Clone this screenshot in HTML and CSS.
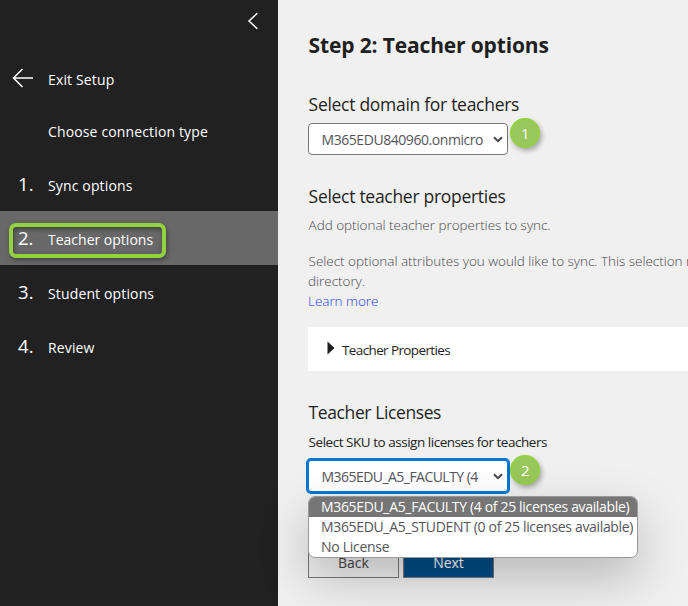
FILE: index.html
```html
<!DOCTYPE html>
<html lang="en">
<head>
<meta charset="utf-8">
<title>Teacher options</title>
<link rel="stylesheet" href="styles.css">
</head>
<body>
<div class="app">
  <nav class="sidebar">
    <div class="collapse">
      <svg width="12" height="18" viewBox="0 0 12 18"><path d="M10.3 1.2 2 9l8.300 7.800"/></svg>
    </div>
    <a class="nav-item exit"><span class="num"><svg width="22" height="20" viewBox="0 0 22 20"><path d="M21 10H1.500M10.500 1 1.500 10l9 9"/></svg></span><span>Exit Setup</span></a>
    <a class="nav-item choose"><span class="num"></span><span>Choose connection type</span></a>
    <a class="nav-item"><span class="num">1.</span><span>Sync options</span></a>
    <a class="nav-item active"><span class="num">2.</span><span>Teacher options</span><span class="highlight"></span></a>
    <a class="nav-item"><span class="num">3.</span><span>Student options</span></a>
    <a class="nav-item"><span class="num">4.</span><span>Review</span></a>
  </nav>
  <main class="content">
    <h1>Step 2: Teacher options</h1>
    <h2 class="domain-title">Select domain for teachers</h2>
    <div class="select">
      <span class="value">M365EDU840960.onmicro</span>
      <svg class="chevron" width="10" height="7" viewBox="0 0 10 7"><path d="m1 1.200 4 4 4-4"/></svg>
      <span class="badge">1</span>
    </div>
    <h2 class="props-title">Select teacher properties</h2>
    <p>Add optional teacher properties to sync.</p>
    <p class="p-attr">Select optional attributes you would like to sync. This selection r<br>directory.<br><a class="learn">Learn more</a></p>
    <div class="card"><svg width="8" height="14" viewBox="0 0 8 14"><path d="M.5.500 7.500 7l-7 6.500z"/></svg><span>Teacher Properties</span></div>
    <h2 class="lic-title">Teacher Licenses</h2>
    <p class="sku">Select SKU to assign licenses for teachers</p>
    <div class="select focused">
      <span class="value">M365EDU_A5_FACULTY (4</span>
      <svg class="chevron" width="10" height="7" viewBox="0 0 10 7"><path d="m1 1.200 4 4 4-4"/></svg>
      <span class="badge">2</span>
      <div class="menu">
        <div class="option selected">M365EDU_A5_FACULTY (4 of 25 licenses available)</div>
        <div class="option">M365EDU_A5_STUDENT (0 of 25 licenses available)</div>
        <div class="option none">No License</div>
      </div>
    </div>
    <div class="buttons"><button class="back">Back</button><button class="next">Next</button></div>
  </main>
</div>
</body>
</html>
```
FILE: styles.css
```css
* { box-sizing: border-box; }
body { margin: 0; font-family: "Open Sans", "Noto Sans", sans-serif; font-size: 13.5px; color: #1f1f22; }
h1, h2, p { margin: 0; white-space: nowrap; }
.app { display: flex; width: 688px; height: 606px; overflow: hidden; }
.sidebar { flex: none; width: 278px; background: #212121; color: #fff; }
.sidebar svg { display: block; fill: none; stroke: #fff; stroke-width: 1.5; }
.collapse { height: 52px; padding: 12px 19px 0 0; display: flex; justify-content: flex-end; }
.nav-item { position: relative; display: flex; align-items: center; height: 54px; padding: 3px 0 0 12px; white-space: nowrap; font-size: 14px; letter-spacing: .14px; }
.num { flex: none; width: 36px; padding-left: 6px; font-size: 18.5px; line-height: 24px; margin-top: -4px; }
.exit { padding-top: 1px; }
.exit .num { padding-left: 0; }
.choose { height: 51px; padding-top: 0; }
.active { background: #686868; letter-spacing: 0; }
.highlight { position: absolute; left: 9px; top: 12px; width: 157px; height: 35px; border: 4px solid #92d13f; border-radius: 7px; box-shadow: 1px 2px 5px rgba(0,0,0,.4), inset 1px 2px 5px rgba(0,0,0,.4); }
.content { flex: none; width: 410px; height: 606px; padding: 30px 0 0 30px; background: #f0f0f0; }
h1 { font-size: 21px; line-height: 30px; font-weight: 700; letter-spacing: -.15px; text-indent: .6px; }
h2 { font-size: 17.5px; line-height: 24px; font-weight: 400; letter-spacing: -.29px; text-indent: .6px; }
.domain-title { margin: 32px 0 7px; }
.select { position: relative; display: flex; align-items: center; justify-content: space-between; width: 200px; height: 32px; padding: 0 4px 0 12.5px; border: 1px solid #777; border-radius: 4px; background: #fff; color: #55555c; font-size: 14px; letter-spacing: -.44px; }
.value { width: 162px; overflow: hidden; white-space: nowrap; line-height: 24px; margin-top: 2px; font-weight: 400; }
.chevron { fill: none; stroke: #444850; stroke-width: 2; }
.badge { position: absolute; left: 201px; top: -6px; width: 30px; height: 30px; border-radius: 50%; border: 2px solid #92d13f; background: #98c75b; color: #fff; font-size: 15px; line-height: 26px; text-align: center; box-shadow: 2px 3px 5px rgba(0,0,0,.3); }
.props-title { margin: 29px 0 7px; }
p { line-height: 20px; font-weight: 330; color: #48484d; font-size: 13.5px; letter-spacing: -.03px; text-indent: .6px; }
.p-attr { margin-top: 16px; }
.learn { color: #233cff; }
.card { display: flex; align-items: center; height: 44px; margin-top: 16px; padding-left: 19px; background: #fff; white-space: nowrap; letter-spacing: -.62px; }
.card svg { fill: #1f1f1f; margin: -3px 7px 0 0; }
.card span { padding-top: 2px; }
.lic-title { margin: 29px 0 8px; letter-spacing: -.4px; }
.sku { color: #222; font-weight: 400; letter-spacing: -.47px; }
.focused { width: 204px; height: 36px; margin: 6px 0 0 -2px; border: 3px solid #0078d4; border-radius: 5px; padding: 0 4px 0 12.5px; }
.focused .value { letter-spacing: -.54px; }
.focused .badge { left: 201px; top: -6px; }
.menu { position: absolute; z-index: 2; left: -1px; top: 35px; width: 330px; height: 62px; border: 1px solid #999; border-radius: 7px; background: #fff; box-shadow: 0 20px 50px rgba(0,0,0,.24); letter-spacing: -.34px; }
.option { height: 20px; line-height: 20px; padding-left: 12px; white-space: nowrap; }
.none { letter-spacing: -.28px; }
.selected { background: #767676; color: #fff; border-radius: 6px 6px 0 0; }
.buttons { display: flex; gap: 4px; margin-top: 54px; }
button { width: 91px; height: 30px; padding: 0; border: 1px solid #777; background: #f0f0f0; color: #444; font: 14px/28px "Open Sans", sans-serif; }
.next { background: #004d87; color: #fff; }
```
